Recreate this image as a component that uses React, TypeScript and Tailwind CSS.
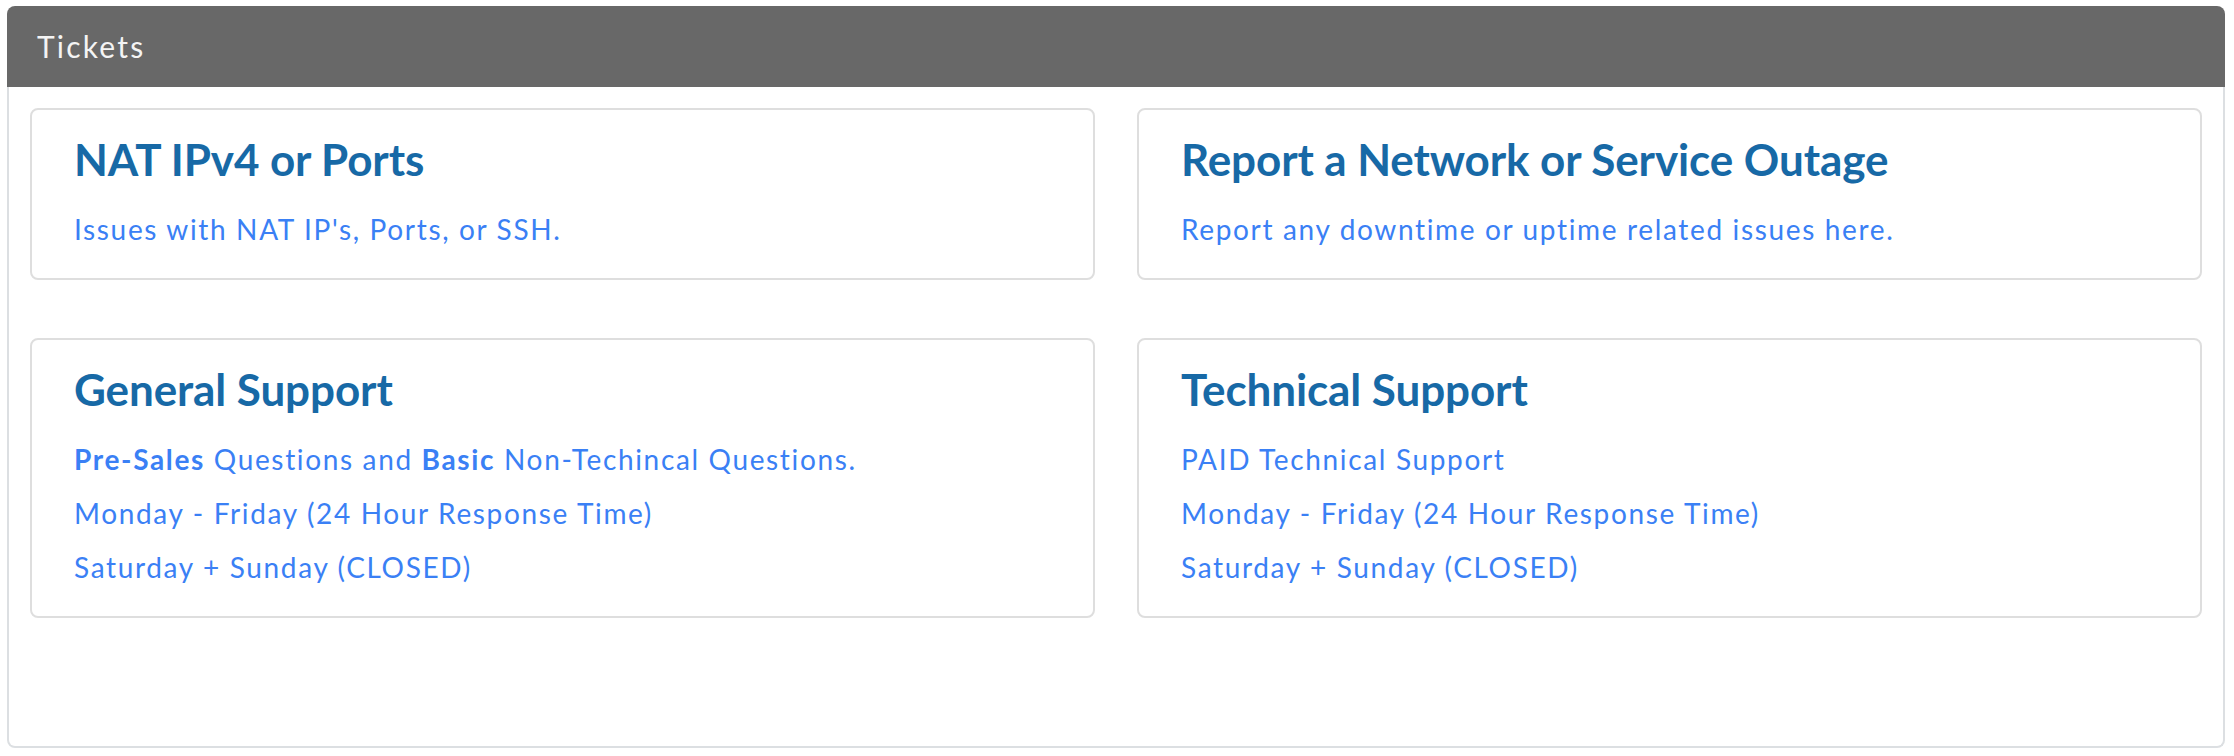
import type { ReactNode } from "react";

type Ticket = {
  title: string;
  lines: ReactNode[];
};

const tickets: Ticket[] = [
  {
    title: "NAT IPv4 or Ports",
    lines: ["Issues with NAT IP's, Ports, or SSH."],
  },
  {
    title: "Report a Network or Service Outage",
    lines: ["Report any downtime or uptime related issues here."],
  },
  {
    title: "General Support",
    lines: [
      <>
        <b className="font-bold">Pre-Sales</b> Questions and{" "}
        <b className="font-bold">Basic</b> Non-Techincal Questions.
      </>,
      "Monday - Friday (24 Hour Response Time)",
      "Saturday + Sunday (CLOSED)",
    ],
  },
  {
    title: "Technical Support",
    lines: [
      "PAID Technical Support",
      "Monday - Friday (24 Hour Response Time)",
      "Saturday + Sunday (CLOSED)",
    ],
  },
];

function TicketCard({ ticket }: { ticket: Ticket }) {
  return (
    <a
      href="#"
      className="block rounded-[8px] border-2 border-[#dedede] bg-white pt-[23px] pb-[29px] px-[42px]"
    >
      <h3 className="text-[44px] leading-[52px] font-bold tracking-[-0.1px] text-[#1769a6]">
        {ticket.title}
      </h3>
      <div className="mt-[24px] flex flex-col gap-[14px]">
        {ticket.lines.map((line, i) => (
          <p key={i} className="text-[28px] leading-[40px] tracking-[1.65px] text-[#3a80f5]">
            {line}
          </p>
        ))}
      </div>
    </a>
  );
}

export default function App() {
  return (
    <main
      className="min-h-screen bg-white pt-[6px] pl-[7px]"
      style={{ fontFamily: "Lato, 'Noto Sans', sans-serif" }}
    >
      <div className="w-[2218px]">
        {/* Panel header */}
        <div className="flex h-[81px] items-center rounded-t-[8px] bg-[#686868] px-[30px]">
          <h2 className="text-[30px] font-normal tracking-[2.2px] text-[#f4f4f4]">Tickets</h2>
        </div>

        {/* Panel body */}
        <div className="rounded-b-[8px] border-x-2 border-b-2 border-[#dcdfe2] px-[21px] pt-[21px] pb-[128px]">
          <div className="grid grid-cols-2 gap-x-[42px] gap-y-[58px]">
            {tickets.map((t) => (
              <TicketCard key={t.title} ticket={t} />
            ))}
          </div>
        </div>
      </div>
    </main>
  );
}
